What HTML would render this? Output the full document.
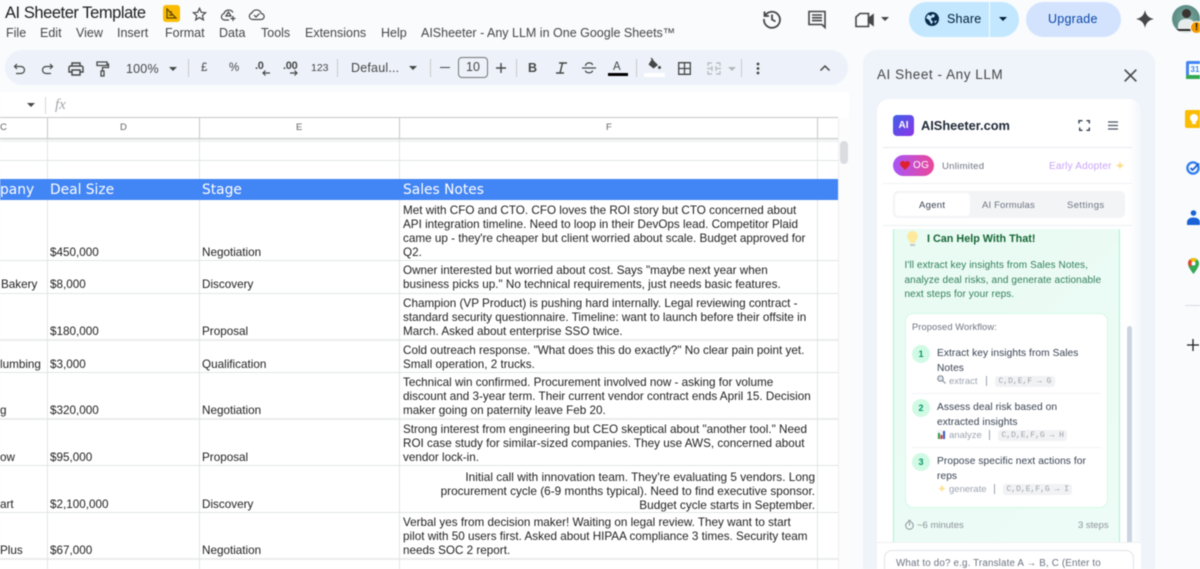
<!DOCTYPE html>
<html><head><meta charset="utf-8"><title>AI Sheeter Template</title>
<style>
*{box-sizing:border-box}
html,body{margin:0;padding:0;width:1200px;height:569px;overflow:hidden;background:#f9fbfd;font-family:"Liberation Sans",sans-serif}
#p{position:relative;width:1200px;height:569px;overflow:hidden;filter:blur(.4px)}
.a{position:absolute}
.t{position:absolute;white-space:nowrap}
.m{font-size:12.5px;color:#444746;top:26px;line-height:14px}
.tb{font-size:12px;color:#444746;line-height:14px}
.c{font-size:11.7px;color:#1f1f1f;line-height:14px;white-space:nowrap;position:absolute;margin-top:1px}
.h{font-family:"DejaVu Sans",sans-serif;font-size:13.8px;color:#fff;position:absolute;top:182px;line-height:15px;white-space:nowrap}
.hl{position:absolute;left:0;width:838px;height:1px;background:#e2e3e3}
.hb{height:2px;background:#ebecec}
.vl{position:absolute;top:118px;width:1px;height:451px;background:#e2e3e3}
.ch{position:absolute;top:122px;font-size:9.5px;color:#5f6368;line-height:12px}
.sep{position:absolute;top:59px;width:1px;height:18px;background:#c7c7c7}
svg{position:absolute;overflow:visible}
.ws{font-size:10.2px;color:#374151;line-height:14.5px;position:absolute;left:937px;white-space:nowrap;letter-spacing:.07px}
.n{position:absolute;left:912px;width:18px;height:18px;border-radius:50%;background:#d1fae5;color:#059669;font-size:9px;font-weight:bold;text-align:center;line-height:18px}
.sm{position:absolute;font-size:9.5px;color:#9ca3af;white-space:nowrap;line-height:11px}
.code{position:absolute;height:11px;background:#f1f2f4;border-radius:3px;font-family:"Liberation Mono",monospace;font-size:8px;color:#9aa0a8;line-height:12px;padding:0 3.5px;white-space:nowrap}
.bar{position:absolute;width:1px;height:10px;background:#9ca3af}
</style></head><body><div id="p">

<!-- title bar -->
<div class="t" style="left:5px;top:3px;font-size:16.5px;letter-spacing:-.45px;line-height:20px;color:#1f1f1f">AI Sheeter Template</div>
<div class="a" style="left:163px;top:5px;width:17px;height:17px;background:#fbbc04;border-radius:3px"></div>
<svg style="left:166px;top:8px" width="11" height="11" viewBox="0 0 11 11" fill="none" stroke="#5c4400" stroke-width="1.2"><path d="M1 1v9h9zM1 1l9 9M3 4h3M3 7h4"/></svg>
<svg style="left:192px;top:7px" width="15" height="15" viewBox="0 0 15 15" fill="none" stroke="#444746" stroke-width="1.2"><path d="M7.5 1.3l1.8 4 4.3.4-3.2 2.9 1 4.3-3.9-2.3-3.8 2.3 1-4.3L1.4 5.700l4.300-.4z"/></svg>
<svg style="left:220px;top:6px" width="17" height="16" viewBox="0 0 17 16" fill="none" stroke="#444746" stroke-width="1.2"><path d="M9 14H4.500a3.200 3.200 0 0 1-.6-6.300A5 5 0 0 1 13 6.500"/><path d="M6 10l2.500-4 2.500 4zM13 10v5M10.500 12.500h5"/></svg>
<svg style="left:248px;top:7px" width="17" height="14" viewBox="0 0 17 14" fill="none" stroke="#444746" stroke-width="1.2"><path d="M4.500 12.500a3.300 3.300 0 0 1-.6-6.500 5 5 0 0 1 9.400.5 3 3 0 0 1-.3 6zM6 8l2 2 3.500-3.500"/></svg>

<span class="t m" style="left:6px">File</span><span class="t m" style="left:40px">Edit</span><span class="t m" style="left:76px">View</span><span class="t m" style="left:117px">Insert</span><span class="t m" style="left:165px">Format</span><span class="t m" style="left:219px">Data</span><span class="t m" style="left:261px">Tools</span><span class="t m" style="left:305px">Extensions</span><span class="t m" style="left:381px">Help</span><span class="t m" style="left:421px">AISheeter - Any LLM in One Google Sheets™</span>

<!-- top right -->
<svg style="left:762px;top:9px" width="20" height="20" viewBox="0 0 20 20" fill="none" stroke="#444746" stroke-width="1.8"><path d="M3.200 6.500A8 8 0 1 1 2 10M2.500 2.500v4.500H7M10 5.500V10.500l3.500 2"/></svg>
<svg style="left:808px;top:10px" width="18" height="18" viewBox="0 0 18 18" fill="none" stroke="#444746" stroke-width="1.6"><path d="M1 1.500h16v16l-3-3H1zM4 5h10M4 7.800h10M4 10.600h10"/></svg>
<svg style="left:855px;top:12px" width="20" height="16" viewBox="0 0 20 16" fill="none" stroke="#444746" stroke-width="1.6"><path d="M1 5l4-3.500h8.500v13H1z"/><path d="M13.500 6.500L18 3v10l-4.500-3.500z" fill="#444746"/></svg>
<svg style="left:881px;top:17px" width="8" height="4" viewBox="0 0 8 4"><path d="M0 0h8L4 4z" fill="#444746"/></svg>
<div class="a" style="left:909px;top:2px;width:110px;height:35px;border-radius:18px;background:#c2e7ff"></div>
<div class="a" style="left:989px;top:2px;width:1px;height:35px;background:#f9fbfd"></div>
<svg style="left:925px;top:12px" width="14" height="14" viewBox="0 0 14 14"><circle cx="7" cy="7" r="7" fill="#0b2a4a"/><path d="M3 2.500l3 1.500 1.500-2L10 3 9 5.500H6.500L6 8l2 1.500-1.500 3L4 8 1 6zM12 8.500l-2 3-.8-2.500z" fill="#c2e7ff"/></svg>
<span class="t" style="left:947px;top:12px;font-size:12.500px;line-height:14px;color:#001d35;letter-spacing:.2px">Share</span>
<svg style="left:999px;top:17px" width="8" height="4" viewBox="0 0 8 4"><path d="M0 0h8L4 4z" fill="#001d35"/></svg>
<div class="a" style="left:1026px;top:2px;width:95px;height:35px;border-radius:18px;background:#d3e3fd"></div>
<span class="t" style="left:1048px;top:12px;font-size:12.500px;line-height:14px;color:#0b47a8;letter-spacing:.25px">Upgrade</span>
<svg style="left:1136px;top:10px" width="18" height="18" viewBox="0 0 18 18"><path d="M9 0c.9 5 3.600 8 9 9-5.400 1-8.100 4-9 9-.9-5-3.600-8-9-9 5.400-1 8.100-4 9-9z" fill="#444746"/></svg>
<div class="a" style="left:1172px;top:5px;width:28px;height:28px;border-radius:50%;background:radial-gradient(circle at 50% 45%,#7fa9a0 0,#5c8d85 60%,#9ab3ae 100%);overflow:hidden">
 <div class="a" style="left:10px;top:4px;width:9px;height:9px;border-radius:50%;background:#3b3330"></div>
 <div class="a" style="left:6px;top:14px;width:17px;height:14px;border-radius:7px 7px 0 0;background:#e6ecec"></div>
 <div class="a" style="left:4px;top:24px;width:18px;height:2px;background:#2b2a26"></div>
</div>
<div class="a" style="left:1190px;top:21px;width:13px;height:13px;border-radius:50%;background:#f29900;border:1px solid #fff;color:#111;font-size:10px;font-weight:bold;line-height:11px;text-align:center">!</div>

<!-- toolbar -->
<div class="a" style="left:5px;top:50px;width:843px;height:35px;border-radius:18px;background:#edf2fa"></div>
<svg style="left:13px;top:63px" width="14" height="12" viewBox="0 0 14 12" fill="none" stroke="#444746" stroke-width="1.2"><path d="M4 1L1.500 3.500 4 6M1.500 3.500H8a3.500 3.500 0 0 1 0 7H3"/></svg>
<svg style="left:40px;top:63px" width="14" height="12" viewBox="0 0 14 12" fill="none" stroke="#444746" stroke-width="1.2"><path d="M10 1l2.500 2.500L10 6M12.500 3.500H6a3.500 3.500 0 0 0 0 7h5"/></svg>
<svg style="left:68px;top:62px" width="16" height="14" viewBox="0 0 16 14" fill="none" stroke="#444746" stroke-width="1.400"><path d="M4 4V1h8v3M4 10H1V5.500A1.500 1.500 0 0 1 2.500 4h11A1.500 1.500 0 0 1 15 5.500V10h-3M4 8h8v5H4z"/></svg>
<svg style="left:96px;top:61px" width="13" height="16" viewBox="0 0 13 16" fill="none" stroke="#444746" stroke-width="1.300"><path d="M1 1h10v3.500H1zM11 3h1.500v3.500h-6V10M5 10h3v5H5z"/></svg>
<span class="t tb" style="left:126px;top:62px;font-size:12.500px;letter-spacing:.2px">100%</span>
<svg style="left:169px;top:67px" width="8" height="4" viewBox="0 0 8 4"><path d="M0 0h8L4 4z" fill="#444746"/></svg>
<div class="sep" style="left:188px"></div>
<span class="t tb" style="left:201px;top:61px;font-size:11.500px">£</span>
<span class="t tb" style="left:229px;top:61px;font-size:11.500px">%</span>
<span class="t tb" style="left:255px;top:59px;font-size:11px;font-weight:bold;letter-spacing:-.3px">.0</span>
<svg style="left:262px;top:70px" width="8" height="6" viewBox="0 0 8 6" fill="none" stroke="#444746" stroke-width="1.200"><path d="M8 3H1M3.500.5L1 3l2.500 2.500"/></svg>
<span class="t tb" style="left:283px;top:59px;font-size:11px;font-weight:bold;letter-spacing:-.3px">.00</span>
<svg style="left:290px;top:70px" width="8" height="6" viewBox="0 0 8 6" fill="none" stroke="#444746" stroke-width="1.200"><path d="M0 3h7M4.500.5L7 3 4.500 5.500"/></svg>
<span class="t tb" style="left:311px;top:61px;font-size:10.500px">123</span>
<div class="sep" style="left:337px"></div>
<span class="t tb" style="left:351px;top:61px;font-size:12.500px;letter-spacing:.2px">Defaul...</span>
<svg style="left:409px;top:66px" width="8" height="4" viewBox="0 0 8 4"><path d="M0 0h8L4 4z" fill="#444746"/></svg>
<div class="sep" style="left:430px"></div>
<div class="a" style="left:440px;top:67px;width:10px;height:1.400px;background:#444746"></div>
<div class="a" style="left:458px;top:57px;width:30px;height:21px;border:1px solid #747775;border-radius:4px;font-size:12.500px;color:#444746;text-align:center;line-height:19px">10</div>
<svg style="left:496px;top:63px" width="10" height="10" viewBox="0 0 10 10" stroke="#444746" stroke-width="1.400"><path d="M0 5h10M5 0v10"/></svg>
<div class="sep" style="left:516px"></div>
<span class="t tb" style="left:528px;top:61px;font-size:12.500px;font-weight:bold">B</span>
<svg style="left:556px;top:62px" width="11" height="12" viewBox="0 0 11 12" fill="none" stroke="#444746" stroke-width="1.500"><path d="M3 1h8M0 11h8M6.500 1L4 11"/></svg>
<svg style="left:582px;top:62px" width="14" height="12" viewBox="0 0 14 12" fill="none" stroke="#444746" stroke-width="1.300"><path d="M0 6h14M3.500 4c0-4 7-4 7-1M10.500 8.500c0 3-7 3-7 0"/></svg>
<span class="t tb" style="left:613px;top:60px;font-size:11.500px">A</span>
<div class="a" style="left:608px;top:73px;width:20px;height:3px;background:#000"></div>
<div class="sep" style="left:636px"></div>
<svg style="left:647px;top:58px" width="14" height="13" viewBox="0 0 14 13"><path d="M5 1l6 6-4.500 3.500L1.500 6.500z" fill="#444746"/><path d="M4 0l2 2" stroke="#444746" stroke-width="1.200"/><circle cx="12.500" cy="9.500" r="1.500" fill="#444746"/></svg>
<div class="a" style="left:644px;top:73px;width:21px;height:4px;background:#fff"></div>
<svg style="left:678px;top:62px" width="13" height="13" viewBox="0 0 13 13" fill="none" stroke="#444746" stroke-width="1.300"><path d="M.7.700h11.600v11.600H.7zM6.500.700v11.600M.7 6.500h11.600"/></svg>
<svg style="left:707px;top:62px" width="14" height="13" viewBox="0 0 14 13" fill="none" stroke="#b4b8bc" stroke-width="1.200"><path d="M5 1H1v3M1 9v3h4M9 1h4v3M13 9v3H9M0 6.500h5M9 6.500h5M5 4v5M9 4v5"/></svg>
<svg style="left:728px;top:67px" width="8" height="4" viewBox="0 0 8 4"><path d="M0 0h8L4 4z" fill="#b4b8bc"/></svg>
<div class="sep" style="left:741px"></div>
<svg style="left:756px;top:62px" width="4" height="13" viewBox="0 0 4 13" fill="#444746"><circle cx="2" cy="2" r="1.400"/><circle cx="2" cy="6.500" r="1.400"/><circle cx="2" cy="11" r="1.400"/></svg>
<svg style="left:820px;top:65px" width="10" height="6" viewBox="0 0 10 6" fill="none" stroke="#444746" stroke-width="1.500"><path d="M.5 5.500L5 1l4.500 4.500"/></svg>

<!-- formula bar + grid base -->
<div class="a" style="left:0;top:92px;width:849px;height:477px;background:#fff"></div>
<svg style="left:27px;top:103px" width="8" height="4" viewBox="0 0 8 4"><path d="M0 0h8L4 4z" fill="#444746"/></svg>
<div class="a" style="left:45px;top:97px;width:1px;height:17px;background:#d5d7d9"></div>
<span class="t" style="left:55px;top:98px;font-family:'Liberation Serif',serif;font-style:italic;font-size:15px;line-height:15px;color:#a0a4a8">fx</span>

<div class="a" style="left:0;top:117px;width:838px;height:1px;background:#c7c7c7"></div>
<div class="a" style="left:0;top:138px;width:838px;height:1px;background:#c7c7c7"></div>
<div class="a" style="left:0;top:139px;width:838px;height:3px;background:#f1f3f4"></div>
<div class="a" style="left:838px;top:118px;width:11px;height:451px;background:#fcfcfc;border-left:1px solid #eceef0"></div>
<div class="a" style="left:840px;top:141px;width:8px;height:23px;background:#dadce0;border-radius:4px"></div>

<div class="hl" style="top:160px"></div>
<div class="hl" style="top:260px"></div><div class="hl" style="top:293px"></div><div class="hl hb" style="top:339px"></div><div class="hl" style="top:372px"></div><div class="hl hb" style="top:418px"></div><div class="hl" style="top:465px"></div><div class="hl" style="top:512px"></div><div class="hl hb" style="top:558px"></div>
<div class="vl" style="left:47px"></div><div class="vl" style="left:199px"></div><div class="vl" style="left:399px"></div><div class="vl" style="left:817px"></div>
<div class="a" style="left:47px;top:118px;width:1px;height:21px;background:#c7c7c7"></div><div class="a" style="left:199px;top:118px;width:1px;height:21px;background:#c7c7c7"></div><div class="a" style="left:399px;top:118px;width:1px;height:21px;background:#c7c7c7"></div><div class="a" style="left:817px;top:118px;width:1px;height:21px;background:#c7c7c7"></div>
<span class="ch" style="left:0">C</span><span class="ch" style="left:120px">D</span><span class="ch" style="left:296px">E</span><span class="ch" style="left:606px">F</span>

<div class="a" style="left:0;top:179px;width:838px;height:21px;background:#4285f4"></div>
<div class="h" style="left:0;top:182.500px">pany</div><div class="h" style="left:50px;top:182.500px">Deal Size</div><div class="h" style="left:202px;top:182.500px">Stage</div><div class="h" style="left:403px;top:182.500px">Sales Notes</div>

<!-- C column -->
<span class="c" style="left:1px;top:277px">Bakery</span>
<span class="c" style="left:0;top:357px">lumbing</span>
<span class="c" style="left:0;top:403px">g</span>
<span class="c" style="left:0;top:450px">ow</span>
<span class="c" style="left:0;top:497px">art</span>
<span class="c" style="left:0;top:543px">Plus</span>
<!-- D -->
<span class="c" style="left:50px;top:245px">$450,000</span>
<span class="c" style="left:50px;top:277px">$8,000</span>
<span class="c" style="left:50px;top:324px">$180,000</span>
<span class="c" style="left:50px;top:357px">$3,000</span>
<span class="c" style="left:50px;top:403px">$320,000</span>
<span class="c" style="left:50px;top:450px">$95,000</span>
<span class="c" style="left:50px;top:497px">$2,100,000</span>
<span class="c" style="left:50px;top:543px">$67,000</span>
<!-- E -->
<span class="c" style="left:202px;top:245px">Negotiation</span>
<span class="c" style="left:202px;top:277px">Discovery</span>
<span class="c" style="left:202px;top:324px">Proposal</span>
<span class="c" style="left:202px;top:357px">Qualification</span>
<span class="c" style="left:202px;top:403px">Negotiation</span>
<span class="c" style="left:202px;top:450px">Proposal</span>
<span class="c" style="left:202px;top:497px">Discovery</span>
<span class="c" style="left:202px;top:543px">Negotiation</span>
<!-- F -->
<span class="c" style="left:403px;top:203px">Met with CFO and CTO. CFO loves the ROI story but CTO concerned about<br>API integration timeline. Need to loop in their DevOps lead. Competitor Plaid<br>came up - they're cheaper but client worried about scale. Budget approved for<br>Q2.</span>
<span class="c" style="left:403px;top:263px">Owner interested but worried about cost. Says "maybe next year when<br>business picks up." No technical requirements, just needs basic features.</span>
<span class="c" style="left:403px;top:296px">Champion (VP Product) is pushing hard internally. Legal reviewing contract -<br>standard security questionnaire. Timeline: want to launch before their offsite in<br>March. Asked about enterprise SSO twice.</span>
<span class="c" style="left:403px;top:343px">Cold outreach response. "What does this do exactly?" No clear pain point yet.<br>Small operation, 2 trucks.</span>
<span class="c" style="left:403px;top:375px">Technical win confirmed. Procurement involved now - asking for volume<br>discount and 3-year term. Their current vendor contract ends April 15. Decision<br>maker going on paternity leave Feb 20.</span>
<span class="c" style="left:403px;top:422px">Strong interest from engineering but CEO skeptical about "another tool." Need<br>ROI case study for similar-sized companies. They use AWS, concerned about<br>vendor lock-in.</span>
<span class="c" style="right:385px;top:469px;text-align:right;font-size:11.800px">Initial call with innovation team. They're evaluating 5 vendors. Long<br>procurement cycle (6-9 months typical). Need to find executive sponsor.<br>Budget cycle starts in September.</span>
<span class="c" style="left:403px;top:515px">Verbal yes from decision maker! Waiting on legal review. They want to start<br>pilot with 50 users first. Asked about HIPAA compliance 3 times. Security team<br>needs SOC 2 report.</span>

<!-- side panel -->
<div class="a" style="left:863px;top:50px;width:292px;height:530px;background:#eff3fa;border-radius:14px 14px 0 0"></div>
<span class="t" style="left:877px;top:67px;font-size:13.500px;line-height:16px;color:#444746;letter-spacing:.55px">AI Sheet - Any LLM</span>
<svg style="left:1124px;top:69px" width="13" height="13" viewBox="0 0 13 13" stroke="#444746" stroke-width="1.600"><path d="M.7.700l11.600 11.600M12.300.700L.7 12.300"/></svg>
<div class="a" style="left:877px;top:99px;width:264px;height:480px;background:#fff;border-radius:12px 12px 0 0"></div>
<div class="a" style="left:1129px;top:99px;width:12px;height:480px;background:linear-gradient(90deg,#fff,#f4f6fb);border-radius:0 12px 0 0"></div>
<div class="a" style="left:893px;top:115px;width:21px;height:21px;border-radius:4px;background:linear-gradient(135deg,#3f5fe8,#8b35e8);color:#fff;font-size:10px;font-weight:bold;text-align:center;line-height:21px">AI</div>
<span class="t" style="left:921px;top:118px;font-size:12.800px;font-weight:bold;line-height:16px;color:#1f2937">AISheeter.com</span>
<svg style="left:1079px;top:120px" width="11" height="11" viewBox="0 0 11 11" fill="none" stroke="#374151" stroke-width="1.400"><path d="M0 3.500V.7h3.500M7.500.7H10.300v2.800M10.300 7.500v2.800H7.500M3.500 10.300H.7V7.500"/></svg>
<svg style="left:1108px;top:121px" width="10" height="9" viewBox="0 0 10 9" stroke="#4b5563" stroke-width="1.200"><path d="M0 1h10M0 4.500h10M0 8h10"/></svg>
<div class="a" style="left:883px;top:147px;width:249px;height:1px;background:#e9ebee"></div>
<div class="a" style="left:893px;top:155px;width:41px;height:21px;border-radius:11px;background:linear-gradient(90deg,#a855f7,#ec4899)"></div>
<svg style="left:900px;top:161px" width="10" height="9" viewBox="0 0 10 9"><path d="M5 9L.8 4.700C-1 2.500 1 0 2.800 0 3.900 0 4.600.6 5 1.300 5.400.6 6.100 0 7.200 0 9 0 11 2.500 9.200 4.700z" fill="#e0202f"/></svg>
<span class="t" style="left:913px;top:160px;font-size:10px;line-height:12px;color:#fff;letter-spacing:.3px">OG</span>
<span class="t" style="left:942px;top:161px;font-size:9.500px;line-height:12px;color:#6b7280;letter-spacing:.3px">Unlimited</span>
<span class="t" style="left:1049px;top:161px;font-size:10px;line-height:12px;color:#c9a4f7;letter-spacing:.2px">Early Adopter</span>
<svg style="left:1115px;top:160px" width="10" height="11" viewBox="0 0 10 11"><path d="M5 1c.4 3 1.500 4 5 4.500-3.500.5-4.600 1.500-5 4.500-.4-3-1.500-4-5-4.500 3.500-.5 4.600-1.500 5-4.500z" fill="#fbdf8a"/></svg>
<div class="a" style="left:883px;top:183px;width:249px;height:1px;background:#f0f1f3"></div>
<div class="a" style="left:893px;top:191px;width:232px;height:27px;background:#f3f4f6;border-radius:5px"></div>
<div class="a" style="left:895px;top:193px;width:75px;height:23px;background:#fff;border-radius:4px"></div>
<span class="t" style="left:919px;top:200px;font-size:9.500px;line-height:12px;color:#374151;letter-spacing:.3px">Agent</span>
<span class="t" style="left:982px;top:200px;font-size:9.500px;line-height:12px;color:#6b7280;letter-spacing:.15px">AI Formulas</span>
<span class="t" style="left:1067px;top:200px;font-size:9.500px;line-height:12px;color:#6b7280;letter-spacing:.4px">Settings</span>
<div class="a" style="left:883px;top:225px;width:249px;height:1px;background:#eceef0"></div>

<div class="a" style="left:893px;top:229px;width:227px;height:314px;background:linear-gradient(135deg,#e9fbf3,#eefcf7);border:1px solid #a7f3d0;border-top:0"></div>
<svg style="left:907px;top:231px" width="11" height="16" viewBox="0 0 11 16"><path d="M5.500 0A5.300 5.300 0 0 0 2.500 9.700V12h6V9.700A5.300 5.300 0 0 0 5.500 0z" fill="#fdea9c"/><path d="M3 13h5v2H3z" fill="#c3c7cc"/></svg>
<span class="t" style="left:927px;top:233px;font-size:10.800px;font-weight:bold;line-height:13px;color:#166534">I Can Help With That!</span>
<span class="t" style="left:904.500px;top:259px;font-size:10px;line-height:14.600px;color:#2f7d59;letter-spacing:.1px">I'll extract key insights from Sales Notes,<br>analyze deal risks, and generate actionable<br>next steps for your reps.</span>
<div class="a" style="left:905px;top:313px;width:203px;height:195px;background:#fff;border:1px solid #d1fae5;border-radius:8px"></div>
<span class="t" style="left:912px;top:322px;font-size:9.300px;line-height:11px;color:#6b7280;letter-spacing:.1px">Proposed Workflow:</span>

<div class="n" style="top:345px">1</div>
<span class="ws" style="top:347px">Extract key insights from Sales<br>Notes</span>
<svg style="left:937px;top:375px" width="9" height="9" viewBox="0 0 9 9" fill="none" stroke="#8a9199" stroke-width="1.200"><circle cx="3.500" cy="3.500" r="2.700" fill="#dbe7ef"/><path d="M5.500 5.500L8.500 8.500"/></svg>
<span class="sm" style="left:949px;top:376px">extract</span>
<div class="bar" style="left:986px;top:376px"></div>
<span class="code" style="left:995px;top:376px">C,D,E,F → G</span>
<div class="a" style="left:912px;top:393px;width:189px;height:1px;background:#f1f3f5"></div>

<div class="n" style="top:399px">2</div>
<span class="ws" style="top:401px">Assess deal risk based on<br>extracted insights</span>
<svg style="left:937px;top:430px" width="9" height="9" viewBox="0 0 9 9"><path d="M0 0h9v9H0z" fill="#f3f4f6"/><path d="M1 3h2v6H1z" fill="#2f9e44"/><path d="M3.500 5h2v4h-2z" fill="#d9363e"/><path d="M6 1h2v8H6z" fill="#3b5cc4"/></svg>
<span class="sm" style="left:949px;top:430px">analyze</span>
<div class="bar" style="left:989px;top:430px"></div>
<span class="code" style="left:998px;top:430px">C,D,E,F,G → H</span>
<div class="a" style="left:912px;top:447px;width:189px;height:1px;background:#f1f3f5"></div>

<div class="n" style="top:453px">3</div>
<span class="ws" style="top:455px">Propose specific next actions for<br>reps</span>
<svg style="left:937px;top:484px" width="9" height="9" viewBox="0 0 9 9"><path d="M5 0c.3 2.700 1.300 3.700 4 4.500-2.700.8-3.700 1.800-4 4.500-.3-2.700-1.300-3.700-4-4.500 2.700-.8 3.700-1.800 4-4.500z" fill="#fbe39a"/></svg>
<span class="sm" style="left:949px;top:484px">generate</span>
<div class="bar" style="left:994px;top:484px"></div>
<span class="code" style="left:1003px;top:484px">C,D,E,F,G → I</span>

<svg style="left:905px;top:520px" width="9" height="10" viewBox="0 0 9 10" fill="none" stroke="#8a9199" stroke-width="1"><circle cx="4.500" cy="5.500" r="3.800"/><path d="M3 .5h3M4.500 5.500V3"/></svg>
<span class="t" style="left:917px;top:520px;font-size:9.500px;line-height:12px;color:#8a9199">~6 minutes</span>
<span class="t" style="left:1078px;top:520px;font-size:9.500px;line-height:12px;color:#8a9199">3 steps</span>

<div class="a" style="left:1127px;top:326px;width:5px;height:217px;background:#cbd5e1;border-radius:3px 3px 0 0"></div>
<div class="a" style="left:877px;top:542px;width:264px;height:30px;background:#fff;border-top:1px solid #eef0f2"></div>
<div class="a" style="left:884px;top:550px;width:250px;height:30px;background:#fff;border:1px solid #dfe2e6;border-radius:8px"></div>
<span class="t" style="left:896px;top:558px;font-size:9.800px;line-height:12px;color:#6b7280;letter-spacing:.16px">What to do? e.g. Translate A → B, C (Enter to</span>

<!-- right rail -->
<div class="a" style="left:1186px;top:61px;width:18px;height:18px;background:#4285f4;border-radius:2px"></div>
<div class="a" style="left:1186px;top:75px;width:18px;height:4px;background:#34a853"></div>
<div class="a" style="left:1189px;top:64px;width:12px;height:11px;background:#fff;color:#4285f4;font-size:8px;font-weight:bold;text-align:center;line-height:11px">31</div>
<div class="a" style="left:1185px;top:110px;width:18px;height:18px;background:#fbbc04;border-radius:2px"></div>
<div class="a" style="left:1190px;top:114px;width:8px;height:8px;background:#fff;border-radius:50%"></div>
<div class="a" style="left:1192px;top:122px;width:4px;height:2px;background:#fff"></div>
<svg style="left:1186px;top:161px" width="14" height="14" viewBox="0 0 14 14" fill="none"><circle cx="7" cy="7" r="5.600" stroke="#2f7cf0" stroke-width="2.300"/><path d="M4.500 7l2 2L13 2.500" stroke="#1a5fd0" stroke-width="1.800"/></svg>
<svg style="left:1187px;top:210px" width="13" height="15" viewBox="0 0 13 15" fill="#1a62d6"><circle cx="6.500" cy="3" r="2.800"/><path d="M0 15v-2.500C0 9 3 7.500 6.500 7.500S13 9 13 12.500V15z"/></svg>
<svg style="left:1188px;top:258px" width="11" height="16" viewBox="0 0 11 16"><path d="M5.500 0A5.500 5.500 0 0 0 0 5.500C0 9.500 5.500 16 5.500 16S11 9.500 11 5.500A5.500 5.500 0 0 0 5.500 0z" fill="#34a853"/><path d="M0 5.500A5.500 5.500 0 0 1 2 1.300L5.500 5.500 1.500 9z" fill="#ea4335"/><path d="M2 1.300A5.500 5.500 0 0 1 9 1.300L5.500 5.500z" fill="#fbbc04"/><circle cx="5.500" cy="5.500" r="2" fill="#fff"/></svg>
<div class="a" style="left:1185px;top:305px;width:15px;height:1px;background:#dadce0"></div>
<svg style="left:1187px;top:339px" width="12" height="12" viewBox="0 0 12 12" stroke="#1f1f1f" stroke-width="1.300"><path d="M0 6h12M6 0v12"/></svg>

</div></body></html>
